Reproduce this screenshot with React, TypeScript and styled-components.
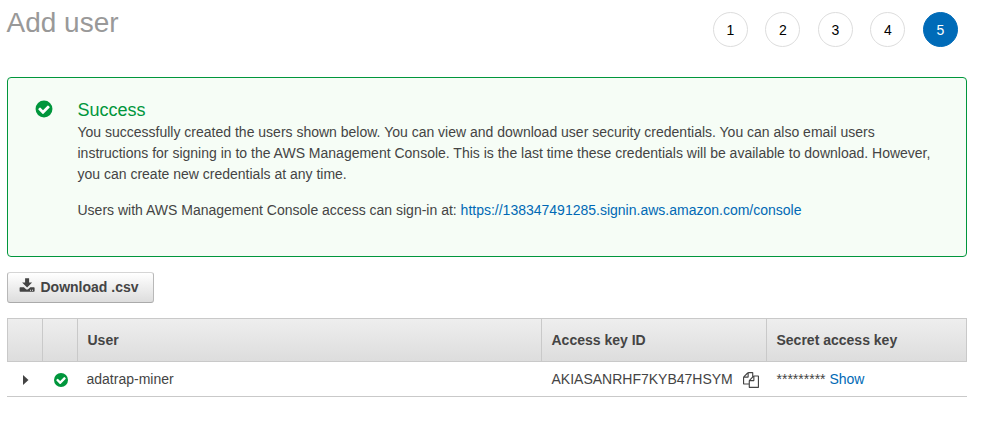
import React from "react";
import styled, { createGlobalStyle } from "styled-components";

const Global = createGlobalStyle`
  * { box-sizing: border-box; }
  body { margin: 0; background: #fff; color: #444; font: 14px/21px "Liberation Sans", Arial, sans-serif; }
`;

const Page = styled.main`
  width: 967px;
  height: 438px;
  padding-left: 7px;
  overflow: hidden;
`;

const Header = styled.header`
  display: flex;
  justify-content: space-between;
  height: 77px;
  padding-right: 9.2px;
`;

const Title = styled.h1`
  margin: 5px 0 0 -0.5px;
  font-size: 28px;
  line-height: 36px;
  font-weight: 400;
  color: #999;
`;

const Steps = styled.ol`
  display: flex;
  gap: 17.5px;
  margin: 12px 0 0;
  padding: 0;
  list-style: none;
`;

const Step = styled.li<{ $active: boolean }>`
  width: 35px;
  height: 35px;
  border: 1px solid ${(p) => (p.$active ? "#006bb8" : "#ddd")};
  border-radius: 50%;
  background: ${(p) => (p.$active ? "#006bb8" : "#fff")};
  color: ${(p) => (p.$active ? "#fff" : "#000")};
  line-height: 34px;
  text-align: center;
`;

const Alert = styled.section`
  display: flex;
  height: 180px;
  padding: 22px 28px 0 27px;
  border: 1px solid #00963c;
  border-radius: 4px;
  background: #f6fdf6;
`;

const AlertIcon = styled.div`
  width: 42.5px;
  flex: none;
  svg { display: block; }
`;

const AlertTitle = styled.h2`
  margin: 0 0 1px;
  font-size: 18px;
  line-height: 21px;
  font-weight: 400;
  color: #00963c;
`;

const Paragraph = styled.p`
  margin: 0 0 15px;
`;

const Link = styled.a`
  color: #0069b5;
  text-decoration: none;
`;

const DownloadButton = styled.button`
  display: flex;
  align-items: center;
  gap: 5.5px;
  width: 147px;
  height: 31px;
  margin: 15px 0;
  padding: 0 0 0 11px;
  border: 1px solid #b8b8b8;
  border-top-color: #d5d5d5;
  border-bottom-color: #aaa;
  border-radius: 3px;
  background: linear-gradient(#fff, #ddd);
  color: #444;
  font: bold 14px/21px "Liberation Sans", Arial, sans-serif;
  svg { margin-top: -5px; }
`;

const Table = styled.div`
  width: 960px;
`;

const Row = styled.div`
  display: grid;
  grid-template-columns: 35px 35px 464px 225px 201px;
`;

const HeadRow = styled(Row)`
  height: 44px;
  border: 1px solid #c9c9c9;
  grid-template-columns: 35px 35px 464px 225px 199px;
  background: linear-gradient(#eee, #ddd);
  font-weight: bold;
`;

const HeadCell = styled.div`
  padding: 11px 0 0 9.5px;
  border-right: 1px solid #c9c9c9;
  &:last-child { border-right: 0; }
`;

const BodyRow = styled(Row)`
  height: 35px;
  border-bottom: 1px solid #c9c9c9;
`;

const Cell = styled.div<{ $pad: number }>`
  display: flex;
  align-items: center;
  padding-left: ${(p) => p.$pad}px;
  white-space: pre;
`;

const IconCell = styled(Cell)`
  padding-top: 2px;
`;

const CopyIcon = styled.svg`
  margin: 2px 0 0 10.5px;
`;

const CheckCircle = ({ size, inset = 0 }: { size: number; inset?: number }) => (
  <svg
    width={size}
    height={size}
    viewBox={`${-inset} ${-inset} ${1536 + inset * 2} ${1536 + inset * 2}`}
    fill="#00963c"
  >
    <circle cx="768" cy="768" r="768" />
    <path fill="#fff" d="M1284 606q0-28-18-46l-91-90q-19-19-45-19t-45 19l-408 407-226-226q-19-19-45-19t-45 19l-91 90q-18 18-18 46 0 27 18 45l362 362q19 19 45 19 27 0 46-19l543-543q18-18 18-45z" />
  </svg>
);

const DownloadIcon = () => (
  <svg width="16" height="14" viewBox="-0.6 0 16 14" fill="#444">
    <path d="M5.5 .3h4v4.2h3L7.5 9.4 2.5 4.5h3z" />
    <path fillRule="evenodd" d="M.7 9.2H4.3L6.2 10.9q1.3 1 2.6 0L10.7 9.2h3.6q.7 0 .7.7v3.1q0 .7-.7.7H.7q-.7 0-.7-.7V9.9q0-.7.7-.7zM10.4 11.8v.9h1v-.9zm2 0v.9h1v-.9z" />
  </svg>
);

const steps = [1, 2, 3, 4, 5];

export default function App() {
  return (
    <>
      <Global />
      <Page>
        <Header>
          <Title>Add user</Title>
          <Steps>
            {steps.map((n) => (
              <Step key={n} $active={n === 5}>{n}</Step>
            ))}
          </Steps>
        </Header>
        <Alert>
          <AlertIcon><CheckCircle size={18} inset={50} /></AlertIcon>
          <div>
            <AlertTitle>Success</AlertTitle>
            <Paragraph>
              You successfully created the users shown below. You can view and download user security credentials. You can also email users<br />
              instructions for signing in to the AWS Management Console. This is the last time these credentials will be available to download. However,<br />
              you can create new credentials at any time.
            </Paragraph>
            <Paragraph>
              Users with AWS Management Console access can sign-in at: <Link>https://138347491285.signin.aws.amazon.com/console</Link>
            </Paragraph>
          </div>
        </Alert>
        <DownloadButton><DownloadIcon />Download .csv</DownloadButton>
        <Table>
          <HeadRow>
            <HeadCell />
            <HeadCell />
            <HeadCell>User</HeadCell>
            <HeadCell>Access key ID</HeadCell>
            <HeadCell>Secret access key</HeadCell>
          </HeadRow>
          <BodyRow>
            <IconCell $pad={16}>
              <svg width="6" height="10" viewBox="0 0 6 10" fill="#444"><path d="M0 0l5.5 5L0 10z" /></svg>
            </IconCell>
            <IconCell $pad={12}><CheckCircle size={14} /></IconCell>
            <Cell $pad={9.5}>adatrap-miner</Cell>
            <Cell $pad={10.5}>
              AKIASANRHF7KYB47HSYM
              <CopyIcon width="16" height="16" viewBox="0 0 1792 1792" fill="#444">
                <path d="M1696 384q40 0 68 28t28 68v1216q0 40-28 68t-68 28h-960q-40 0-68-28t-28-68v-288h-544q-40 0-68-28t-28-68v-672q0-40 20-88t48-76l408-408q28-28 76-48t88-20h416q40 0 68 28t28 68v328q68-40 128-40h416zm-544 213l-299 299h299v-299zm-640-384l-299 299h299v-299zm196 647l316-316v-416h-384v416q0 40-28 68t-68 28h-416v640h512v-256q0-40 20-88t48-76zm956 804v-1152h-384v416q0 40-28 68t-68 28h-416v640h896z" />
              </CopyIcon>
            </Cell>
            <Cell $pad={10.5}>********* <Link>Show</Link></Cell>
          </BodyRow>
        </Table>
      </Page>
    </>
  );
}
